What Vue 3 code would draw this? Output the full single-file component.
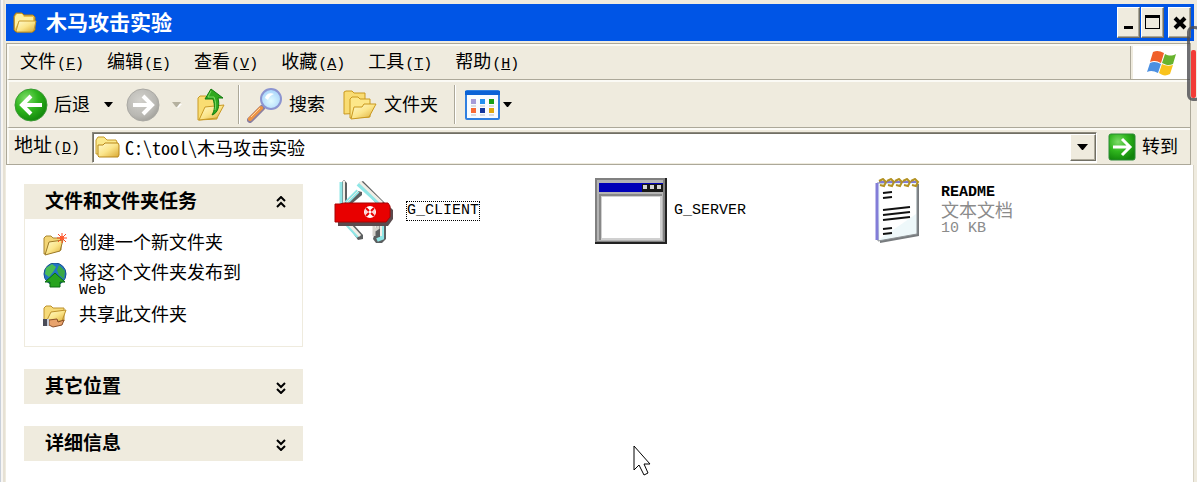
<template>
    <div class="window">
        <svg class="defs" width="0" height="0" aria-hidden="true">
            <defs>
                <linearGradient id="gold" x1="0" y1="0" x2="1" y2="1">
                    <stop offset="0" stop-color="#fffbd0" />
                    <stop offset="0.5" stop-color="#fbe58a" />
                    <stop offset="1" stop-color="#d9a832" />
                </linearGradient>
                <radialGradient id="green" cx="0.35" cy="0.3" r="0.75">
                    <stop offset="0" stop-color="#7fdc6a" />
                    <stop offset="0.5" stop-color="#2fb51d" />
                    <stop offset="1" stop-color="#11850b" />
                </radialGradient>
                <radialGradient id="grey" cx="0.4" cy="0.35" r="0.7">
                    <stop offset="0" stop-color="#d2d1cc" />
                    <stop offset="0.7" stop-color="#b9b8b3" />
                    <stop offset="1" stop-color="#a09f99" />
                </radialGradient>
                <radialGradient id="glass" cx="0.5" cy="0.6" r="0.6">
                    <stop offset="0" stop-color="#e2fbff" />
                    <stop offset="1" stop-color="#a5d3fb" />
                </radialGradient>
            </defs>
        </svg>

        <header class="title-bar">
            <svg class="title-icon" width="24" height="22" viewBox="0 0 24 22">
                <path d="M1 18V4l2-3h6l2 2h9l2 2v13l-2 2H3z" fill="#e9bf4b" stroke="#a97b18" />
                <path d="M2 17V5l2-3h5l2 3h9v4H6z" fill="#fff0a0" />
                <path d="M3 19l3-10h17l-2 9-2 2H4z" fill="url(#gold)" stroke="#c79a2c" />
            </svg>
            <h1 class="title">{{ folderName }}</h1>
            <div class="title-buttons">
                <button class="box-btn" aria-label="最小化">
                    <svg width="22" height="28" viewBox="0 0 22 28"><path d="M6 17h9v3H6z" fill="#000" /></svg>
                </button>
                <button class="box-btn" aria-label="最大化">
                    <svg width="22" height="28" viewBox="0 0 22 28"><path d="M3 6h15v14H3zM4 9v10h13V9z" fill="#000" fill-rule="evenodd" /></svg>
                </button>
                <button class="box-btn close" aria-label="关闭">
                    <svg width="22" height="28" viewBox="0 0 22 28"><path d="M6 9l10 10M16 9L6 19" stroke="#000" stroke-width="4" /></svg>
                </button>
            </div>
        </header>

        <div class="bars">
            <nav class="bar menu-bar">
                <div class="menu">
                    <button v-for="item in menus" :key="item.key" class="flat">{{ item.text }}<span class="latin key">(<u>{{ item.key }}</u>)</span></button>
                </div>
                <div class="flag">
                    <svg width="30" height="28" viewBox="0 0 30 28">
                        <path d="M6 3c4-2 7-1 11 1l-3 10C10 12 8 11 3 13z" fill="#f0602a" />
                        <path d="M18 5c4 2 7 2 11 0l-3 10c-4 2-7 1-11-1z" fill="#67b32e" />
                        <path d="M3 14c4-2 7-1 11 1l-3 9c-4-2-7-3-11-1z" fill="#4c90e2" />
                        <path d="M15 15c4 2 7 2 11 1l-3 9c-4 2-7 2-11-1z" fill="#f9c31b" />
                    </svg>
                </div>
            </nav>

            <div class="bar tool-bar">
                <button class="flat tool">
                    <svg width="34" height="34" viewBox="0 0 34 34">
                        <circle cx="17" cy="17" r="16" fill="url(#green)" stroke="#3c9a35" />
                        <path d="M28 17H9M17 8l-9 9 9 9" fill="none" stroke="#fff" stroke-width="4" />
                    </svg>
                    <span>后退</span>
                </button>
                <button class="flat caret" aria-label="后退列表">
                    <svg width="10" height="6" viewBox="0 0 10 6"><path d="M0 0h9L5 5H4z" fill="#000" /></svg>
                </button>
                <button class="flat tool forward" aria-label="前进">
                    <svg width="34" height="34" viewBox="0 0 34 34">
                        <circle cx="17" cy="17" r="16" fill="url(#grey)" stroke="#aaa9a4" />
                        <path d="M7 17h18M17 8l9 9-9 9" fill="none" stroke="#fff" stroke-width="4" />
                    </svg>
                </button>
                <button class="flat caret next" aria-label="前进列表">
                    <svg width="10" height="6" viewBox="0 0 10 6"><path d="M2 2h8L6 6z" fill="#fff" /><path d="M0 0h9L5 5H4z" fill="#b5b19f" /></svg>
                </button>
                <button class="flat tool up" aria-label="向上">
                    <svg width="30" height="34" viewBox="0 0 30 34">
                        <path d="M2 32V10l2-2h6l2 2h9v21z" fill="#f9dd72" stroke="#c99a25" />
                        <path d="M3 32l6-13 19-2-7 13z" fill="url(#gold)" stroke="#c99a25" />
                        <path d="M15 1l12 9h-5c2 8 0 15-6 17 3-5 3-10 1-16H9z" fill="#2fa81f" stroke="#137a10" />
                        <path d="M15 3l-3 6h6c2 5 2 9 1 13" fill="none" stroke="#7ed965" />
                    </svg>
                </button>
                <span class="divider"></span>
                <button class="flat tool">
                    <svg width="36" height="36" viewBox="0 0 36 36">
                        <path d="M3 33l12-12" stroke="#8a7fa0" stroke-width="6" stroke-linecap="round" />
                        <path d="M3 32l11-11" stroke="#ec9445" stroke-width="4" stroke-linecap="round" />
                        <path d="M4 30l9-9" stroke="#ffd3a0" />
                        <circle cx="24" cy="12" r="10" fill="url(#glass)" stroke="#8c94d0" stroke-width="2" />
                        <path d="M18 11c1-4 5-6 9-4-3 1-5 3-6 6z" fill="#fff" />
                    </svg>
                    <span>搜索</span>
                </button>
                <button class="flat tool folders">
                    <svg width="34" height="30" viewBox="0 0 34 30">
                        <path d="M1 24V2l2-1h6l2 2h11v20z" fill="#f9dc73" stroke="#c9981f" />
                        <path d="M7 28V9l2-2h6l2 2h10v18z" fill="#fde789" stroke="#c9981f" />
                        <path d="M8 29l3-12h8l2-3h12l-7 13z" fill="url(#gold)" stroke="#c9981f" />
                    </svg>
                    <span>文件夹</span>
                </button>
                <span class="divider"></span>
                <button class="flat tool views" aria-label="查看方式">
                    <svg width="36" height="30" viewBox="0 0 36 30">
                        <rect x="1" y="1" width="33" height="28" rx="1" fill="#f8fbff" stroke="#2f7fe0" stroke-width="2" />
                        <path d="M0 1h35v4H0z" fill="#0a62d6" />
                        <path d="M6 9h5v5H6z" fill="#a69cd8" /><path d="M15 9h5v5h-5z" fill="#2290f0" /><path d="M24 9h5v5h-5z" fill="#17a017" />
                        <path d="M6 18h5v5H6z" fill="#fa6a35" /><path d="M15 18h5v5h-5z" fill="#12379e" /><path d="M24 18h5v5h-5z" fill="#e0a80e" />
                        <path d="M6 16h5m4 0h5m4 0h5M6 25h5m4 0h5m4 0h5" stroke="#b9bdc4" />
                    </svg>
                    <svg width="10" height="6" viewBox="0 0 10 6"><path d="M0 0h9L5 5H4z" fill="#000" /></svg>
                </button>
            </div>

            <div class="bar address-bar">
                <label for="address" class="address-label">地址<span class="latin key">(<u>D</u>)</span></label>
                <div class="address-box">
                    <svg width="25" height="22" viewBox="0 0 25 22">
                        <path d="M1 18V4l2-3h6l3 3h9l1 2v12z" fill="#fbe98c" stroke="#c79b2b" />
                        <path d="M3 20V9h5l2-2h13l1 2v10l-1 2H4z" fill="url(#gold)" stroke="#b8871a" />
                    </svg>
                    <input id="address" v-model="address" type="text" />
                    <button class="box-btn drop" aria-label="展开">
                        <svg width="12" height="7" viewBox="0 0 12 7"><path d="M0 0h11L6 6H5z" fill="#000" /></svg>
                    </button>
                </div>
                <button class="flat go">
                    <svg width="28" height="28" viewBox="0 0 28 28">
                        <rect x="1" y="1" width="26" height="26" rx="2" fill="url(#green)" stroke="#2c8a36" />
                        <path d="M5 14h16M14 6l8 8-8 8" fill="none" stroke="#fff" stroke-width="3" />
                    </svg>
                    <span>转到</span>
                </button>
            </div>
        </div>

        <main class="content">
            <aside class="sidebar">
                <section v-for="panel in panels" :key="panel.title" class="panel">
                    <button class="panel-head" :aria-expanded="panel.open" @click="panel.open = !panel.open">
                        <span>{{ panel.title }}</span>
                        <svg width="12" height="13" viewBox="0 0 12 13">
                            <path v-if="panel.open" d="M2 5l4-4 4 4M2 11l4-4 4 4" fill="none" stroke="#000" stroke-width="2" />
                            <path v-else d="M2 2l4 4 4-4M2 8l4 4 4-4" fill="none" stroke="#000" stroke-width="2" />
                        </svg>
                    </button>
                    <ul v-if="panel.open && panel.tasks.length" class="tasks">
                        <li v-for="task in panel.tasks" :key="task.icon">
                            <svg v-if="task.icon == 'new'" width="24" height="24" viewBox="0 0 24 24">
                                <path d="M1 21V5l2-2h5l2 2h8v12z" fill="#f3d575" stroke="#a9852e" />
                                <path d="M2 22L6 9l14-2-3 11z" fill="url(#gold)" stroke="#9c7a28" />
                                <path d="M19 0v10M14 5h10M15 1l8 8M23 1l-8 8" stroke="#fb4a22" />
                                <circle cx="19" cy="5" r="2" fill="#ff5a2d" />
                            </svg>
                            <svg v-else-if="task.icon == 'web'" width="24" height="25" viewBox="0 0 24 25">
                                <circle cx="12" cy="11" r="11" fill="#2374c8" stroke="#174f8e" />
                                <path d="M3 5l6-4 4 3-3 5-4 5-4-3z" fill="#4cbd54" />
                                <path d="M16 2l6 6-1 8-5-4-2-5z" fill="#39a845" />
                                <path d="M12 10l10 9h-5v5H7v-5H2z" fill="#27a31e" stroke="#0b6c12" />
                            </svg>
                            <svg v-else width="24" height="23" viewBox="0 0 24 23">
                                <path d="M1 16V3l2-2h5l2 2h11v13z" fill="#f6da79" stroke="#bd912b" />
                                <path d="M3 17l5-10 15-2-4 11z" fill="url(#gold)" stroke="#bd912b" />
                                <path d="M6 15l8-1 1 3 6-2-2 5-9 2-4-2z" fill="#e8a36c" stroke="#8a4f28" />
                                <path d="M0 14h6v7H0z" fill="#4a4c58" /><path d="M4 14h2v7H4z" fill="#c8ccd6" />
                            </svg>
                            <a href="#">{{ task.text }}<span v-if="task.latin" class="latin small">{{ task.latin }}</span></a>
                        </li>
                    </ul>
                </section>
            </aside>

            <div class="files">
                <div v-for="file in files" :key="file.name" class="file">
                    <div class="file-icon">
                        <svg v-if="file.icon == 'knife'" width="62" height="68" viewBox="0 0 62 68">
                            <path d="M8 29V6l3-3 3 3v19l11-11 4 1v3L16 29z" fill="#5c5f60" />
                            <path d="M26 6l4-2 22 22-2 4h-4z" fill="#5c5f60" />
                            <path d="M14 48h7l9 10v4l-5 1z" fill="#5c5f60" />
                            <path d="M45 44h8v18l-4 4h-6l-3-4z" fill="#5c5f60" />
                            <path d="M8 27V5" stroke="#8fe6e6" stroke-width="3" />
                            <path d="M11 27V4" stroke="#f1eee6" stroke-width="2" />
                            <path d="M13 26l12-12" stroke="#8fe6e6" stroke-width="4" />
                            <path d="M14 25l11-11" stroke="#ece9e2" stroke-width="1" />
                            <path d="M25 7l22 20" stroke="#8fe6e6" stroke-width="4" />
                            <path d="M27 5l22 21" stroke="#f1eee6" stroke-width="3" />
                            <path d="M13 47l12 13" stroke="#8fe6e6" stroke-width="3" />
                            <path d="M15 46l12 13" stroke="#f1eee6" stroke-width="3" />
                            <path d="M41 44v15M45 44v7l-3 2" fill="none" stroke="#d6d3cd" stroke-width="3" />
                            <path d="M49 44v17l-5 2" fill="none" stroke="#8fe6e6" stroke-width="4" />
                            <path d="M48 45v14" stroke="#f1eee6" stroke-width="2" />
                            <path d="M5 30h52l3 3v9l-5 7H5z" fill="#5b4a4d" />
                            <path d="M2 27h5l4-1h44l2 3v11l-4 5H2z" fill="#e80000" stroke="#a80505" />
                            <circle cx="37" cy="35" r="6" fill="#fff" />
                            <path d="M37 35l-5-3v6zM37 35l5-3v6z" fill="#fbd5d5" />
                            <path d="M33 31l3 3M41 31l-3 3M33 39l3-3M41 39l-3-3" stroke="#e80000" stroke-width="2" />
                        </svg>
                        <svg v-else-if="file.icon == 'window'" width="72" height="66" viewBox="0 0 72 66">
                            <path d="M0 0h72v66H0z" fill="#222" />
                            <path d="M0 0h70v64H0z" fill="#808080" />
                            <path d="M2 2h66v61H2z" fill="#b4b4b4" />
                            <path d="M4 5h64v9H4z" fill="#0000b8" />
                            <path d="M47 6h21v8H47z" fill="#181818" />
                            <path d="M48 7h4v4h-4zM55 7h4v4h-4zM62 7h4v4h-4z" fill="#d4d4d4" />
                            <path d="M4 16h63v46H4z" fill="#888" />
                            <path d="M6 18h61v44H6z" fill="#d0d0d0" />
                            <path d="M7 19h58v41H7z" fill="#fff" />
                        </svg>
                        <svg v-else width="46" height="66" viewBox="0 0 46 66">
                            <path d="M4 7l40-1v52L5 65z" fill="#777b7e" />
                            <path d="M2 5l40-1v52L3 63z" fill="#eef8fa" stroke="#8d9295" />
                            <path d="M5 7l36-1v30L5 61z" fill="#fff" />
                            <path d="M2 5v57" stroke="#827dd8" stroke-width="3" />
                            <path d="M4 4h37" stroke="#827dd8" stroke-width="2" />
                            <path d="M4 3l4-2 3 3-2 4-4-1M12 3l4-2 3 3-2 4-4-1M20 3l4-2 3 3-2 4-4-1M28 3l4-2 3 3-2 4-4-1M36 3l4-2 3 3-2 4-4-1" fill="none" stroke="#b39222" stroke-width="2" />
                            <path d="M8 15l9-1M8 20l9-1M8 32l27-3M8 37l27-3M8 42l27-3M8 51l9-1M8 56l9-1" stroke="#111" stroke-width="2" />
                        </svg>
                    </div>
                    <div class="file-text">
                        <span class="latin" :class="{ focused: file.focused, name: file.type }">{{ file.name }}</span>
                        <span v-if="file.type" class="info">{{ file.type }}</span>
                        <span v-if="file.size" class="latin info">{{ file.size }}</span>
                    </div>
                </div>
            </div>
        </main>

        <div class="side-handle"><span></span></div>

        <svg class="cursor" width="18" height="32" viewBox="0 0 18 32">
            <path d="M1 1v24l5-5 5 10 4-2-4-9h6z" fill="#fff" stroke="#000" />
        </svg>
    </div>
</template>


<script setup>
    import { ref } from "vue";

    const folderName = "木马攻击实验";
    const address = ref("C:\\tool\\" + folderName);

    const menus = [
        { text: "文件", key: "F" },
        { text: "编辑", key: "E" },
        { text: "查看", key: "V" },
        { text: "收藏", key: "A" },
        { text: "工具", key: "T" },
        { text: "帮助", key: "H" },
    ];

    const panels = ref([
        {
            title: "文件和文件夹任务",
            open: true,
            tasks: [
                { icon: "new", text: "创建一个新文件夹" },
                { icon: "web", text: "将这个文件夹发布到", latin: "Web" },
                { icon: "share", text: "共享此文件夹" },
            ],
        },
        { title: "其它位置", open: false, tasks: [] },
        { title: "详细信息", open: false, tasks: [] },
    ]);

    const files = [
        { icon: "knife", name: "G_CLIENT", focused: true },
        { icon: "window", name: "G_SERVER" },
        { icon: "text", name: "README", type: "文本文档", size: "10 KB" },
    ];
</script>


<style>
body {
    margin: 0;
    background: #fff;
}
</style>

<style scoped>
.window {
    position: relative;
    box-sizing: border-box;
    min-height: 100vh;
    display: flex;
    flex-direction: column;
    padding: 4px 3px 0 6px;
    overflow: hidden;
    background: linear-gradient(90deg, #c9d0da 1px, #f7f5f2 1px, #f7f5f2 3px, #e6e1d4 3px, #e6e1d4 5px, #efebdf 5px);
    color: #000;
    font-family: "Liberation Sans", "Noto Sans CJK SC", sans-serif;
    font-size: 18px;
    line-height: 20px;
}
.defs {
    position: absolute;
}
svg {
    display: block;
    flex: none;
}
button {
    padding: 0;
    font: inherit;
    color: inherit;
}
.latin {
    font-family: "Liberation Mono", monospace;
    font-size: 15px;
}
.key {
    margin-left: 1px;
}
.flat {
    border: 0;
    background: none;
}
.title-bar {
    display: flex;
    align-items: center;
    height: 37px;
    padding-left: 7px;
    background: #0055e6;
}
.title {
    flex: 1;
    margin: 0 0 0 9px;
    font-size: 21px;
    line-height: 24px;
    color: #fff;
}
.title-buttons {
    display: flex;
    gap: 1px;
    padding-right: 3px;
}
.box-btn {
    display: flex;
    align-items: center;
    justify-content: center;
    box-sizing: border-box;
    width: 23px;
    height: 31px;
    border: 1px solid;
    border-color: #fff #716f64 #716f64 #fff;
    box-shadow: inset -1px -1px #aca899;
    background: #efebde;
}
.close {
    margin-left: 3px;
}
.bars {
    margin: 2px 3px 0 0;
    border: 1px solid #aca899;
    background: #efebde;
}
.bar {
    display: flex;
    align-items: center;
    box-sizing: border-box;
    border-top: 2px solid #fbfaf5;
    border-left: 2px solid #fbfaf5;
}
.menu-bar {
    align-items: stretch;
    height: 36px;
    border-bottom: 1px solid #aca899;
}
.menu {
    flex: 1;
    display: flex;
    align-items: center;
    gap: 23px;
    padding: 2px 0 0 11px;
    border-right: 1px solid #aca899;
}
.flag {
    display: flex;
    align-items: center;
    justify-content: center;
    width: 57px;
    margin-left: 2px;
    background: #fff;
}
.tool-bar {
    height: 48px;
    padding-left: 5px;
    border-bottom: 1px solid #aca899;
}
.tool {
    display: flex;
    align-items: center;
    gap: 6px;
}
.caret {
    margin-left: 14px;
}
.forward {
    margin-left: 12px;
}
.next {
    margin-left: 12px;
}
.up {
    margin-left: 14px;
}
.divider {
    width: 1px;
    height: 39px;
    margin: 0 8px 0 12px;
    background: #aca899;
    box-shadow: 1px 0 #fff;
}
.folders {
    gap: 7px;
    margin-left: 18px;
}
.folders + .divider {
    margin: 0 10px 0 16px;
}
.views {
    gap: 2px;
}
.address-bar {
    height: 36px;
    padding: 0 12px 0 5px;
}
.address-label {
    width: 78px;
    font-size: 19px;
}
.address-box {
    flex: 1;
    display: flex;
    align-items: center;
    box-sizing: border-box;
    height: 31px;
    min-width: 0;
    padding: 0 0 0 2px;
    border: 1px solid;
    border-color: #8c887c #fff #fff #8c887c;
    box-shadow: inset 1px 1px #716f64;
    background: #fff;
}
.address-box input {
    flex: 1;
    min-width: 0;
    height: 24px;
    margin-left: 5px;
    padding: 0;
    border: 0;
    outline: 0;
    background: transparent;
    color: #000;
    font-family: "Noto Sans Mono CJK SC", "Liberation Mono", "Noto Sans CJK SC", monospace;
    font-size: 18px;
}
.drop {
    width: 26px;
    height: 27px;
}
.go {
    display: flex;
    align-items: center;
    gap: 6px;
    margin-left: 11px;
}
.content {
    flex: 1;
    display: flex;
    align-items: flex-start;
    gap: 25px;
    padding: 19px 0 0 18px;
    border-right: 1px solid #d8d3c4;
    background: #fff;
}
.sidebar {
    flex: none;
    display: flex;
    flex-direction: column;
    gap: 22px;
    width: 279px;
}
.panel {
    background: #efebde;
}
.panel-head {
    display: flex;
    align-items: center;
    justify-content: space-between;
    box-sizing: border-box;
    width: 100%;
    height: 35px;
    padding: 1px 16px 0 21px;
    border: 0;
    background: #efebde;
    font-size: 19px;
    font-weight: bold;
}
.tasks {
    display: flex;
    flex-direction: column;
    gap: 6px;
    margin: 0;
    padding: 14px 18px 18px;
    border: 1px solid #efebde;
    border-top: 0;
    background: #fff;
    list-style: none;
}
.tasks li {
    display: flex;
    align-items: flex-start;
    gap: 12px;
}
.tasks a {
    color: #000;
    text-decoration: none;
}
.small {
    display: block;
    line-height: 16px;
}
.files {
    flex: 1;
    display: grid;
    grid-template-columns: repeat(auto-fill, 267px);
}
.file {
    display: flex;
    align-items: center;
    gap: 7px;
    height: 54px;
}
.file-icon {
    display: flex;
    justify-content: center;
    width: 72px;
}
.file-text {
    display: flex;
    flex-direction: column;
    align-items: flex-start;
    line-height: 18px;
}
.focused {
    outline: 1px dotted #000;
}
.name {
    font-weight: bold;
}
.info {
    color: #8b8b8b;
}
.side-handle {
    position: absolute;
    top: 26px;
    right: -4px;
    box-sizing: border-box;
    width: 14px;
    height: 75px;
    padding: 21px 0 0 1px;
    border: 3px solid rgba(75, 75, 80, 0.8);
    border-radius: 6px;
}
.side-handle span {
    display: block;
    width: 5px;
    height: 48px;
    border-radius: 2px;
    background: #f23b36;
}
.cursor {
    position: absolute;
    top: 445px;
    left: 633px;
}
</style>
